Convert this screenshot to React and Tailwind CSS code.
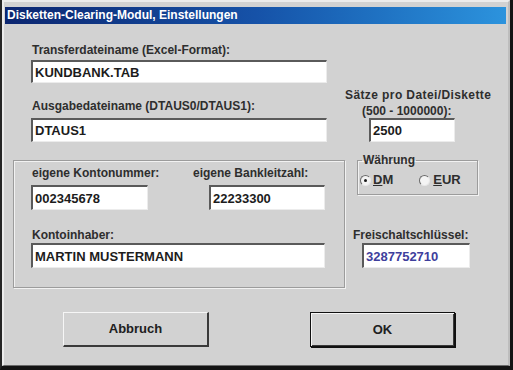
import React from "react";

function Label({ className = "", children }) {
  return (
    <div className={`text-[12px] leading-[14px] text-[#2e2e2e] whitespace-nowrap ${className}`}>
      {children}
    </div>
  );
}

function Field({ className = "", tone = "text-[#1c1c1c]", children }) {
  return (
    <div
      className={`bg-white border-t-2 border-l-2 border-t-[#5a5a5a] border-l-[#5a5a5a] border-r border-b border-r-[#ececec] border-b-[#ececec] flex items-center pl-[2px] text-[13px] leading-[15px] whitespace-nowrap overflow-hidden ${tone} ${className}`}
    >
      {children}
    </div>
  );
}

function Radio({ checked }) {
  return (
    <div className="w-[11px] h-[11px] rounded-full bg-[#f4f4f4] border border-t-[#6a6a6a] border-l-[#6a6a6a] border-r-[#e8e8e8] border-b-[#e8e8e8] flex items-center justify-center">
      {checked ? <div className="w-[3px] h-[3px] rounded-full bg-[#1a1a1a]" /> : null}
    </div>
  );
}

export default function App() {
  return (
    <div className="w-[513px] h-[370px] bg-[#d2d2d2] border-l-2 border-l-[#262626] border-r-[3px] border-r-[#141414] border-b-[4px] border-b-[#141414] font-['Liberation_Sans',Arial,sans-serif] font-bold overflow-hidden">
      <div className="h-full border-t-2 border-l-2 border-t-[#ececec] border-l-[#ececec] border-r-2 border-r-[#bdbdbd] border-b border-b-[#6a6a6a] pt-[5px] pl-px pr-[2px] flex flex-col">
        {/* title bar */}
        <div className="h-[17px] bg-linear-to-r from-[#0c2670] via-[#1652a8] to-[#2c93dd] text-white text-[12px] leading-[17px] pl-[2px] whitespace-nowrap">
          Disketten-Clearing-Modul, Einstellungen
        </div>

        <div className="flex">
          {/* left column */}
          <div className="ml-[8px] w-[332px] flex flex-col">
            <Label className="mt-[19px] pl-[19px]">Transferdateiname (Excel-Format):</Label>
            <Field className="mt-[3px] ml-[18px] w-[296px] h-[23px]">KUNDBANK.TAB</Field>

            <Label className="mt-[16px] pl-[19px]">Ausgabedateiname (DTAUS0/DTAUS1):</Label>
            <Field className="mt-[5px] ml-[18px] w-[296px] h-[24px]">DTAUS1</Field>

            <div className="mt-[18px] w-[332px] h-[128px] border border-[#9c9c9c] shadow-[inset_1px_1px_0_#f2f2f2,1px_1px_0_#f2f2f2] flex flex-col">
              <div className="mt-[5px] flex">
                <Label className="ml-[18px] w-[161px]">eigene Kontonummer:</Label>
                <Label>eigene Bankleitzahl:</Label>
              </div>
              <div className="mt-[5px] flex">
                <Field className="ml-[17px] w-[117px] h-[25px]">002345678</Field>
                <Field className="ml-[61px] w-[116px] h-[25px]">22233300</Field>
              </div>
              <Label className="mt-[18px] ml-[18px]">Kontoinhaber:</Label>
              <Field className="mt-[1px] ml-[17px] w-[294px] h-[25px]">MARTIN MUSTERMANN</Field>
            </div>
          </div>

          {/* right column */}
          <div className="flex-1 flex flex-col">
            <Label className="mt-[64px] tracking-[0.4px]">Sätze pro Datei/Diskette</Label>
            <Label className="mt-[2px] pl-[17px]">(500 - 1000000):</Label>
            <Field className="ml-[24px] w-[86px] h-[24px]">2500</Field>

            <fieldset className="mt-[11px] ml-[12px] w-[121px] border border-[#9c9c9c] shadow-[inset_1px_1px_0_#f2f2f2,1px_1px_0_#f2f2f2] pl-[2px] pb-[7px]">
              <legend className="ml-[2px] px-px text-[12px] leading-[14px] text-[#2e2e2e]">Währung</legend>
              <div className="mt-[6px] h-[14px] flex items-center text-[13px] leading-[14px] text-[#2e2e2e]">
                <Radio checked />
                <span className="ml-[2px]">
                  <span className="underline">D</span>M
                </span>
                <span className="ml-[26px]">
                  <Radio />
                </span>
                <span className="ml-[3px]">
                  <span className="underline">E</span>UR
                </span>
              </div>
            </fieldset>

            <Label className="mt-[33px] pl-[8px]">Freischaltschlüssel:</Label>
            <Field className="mt-[1px] ml-[17px] w-[108px] h-[25px]" tone="text-[#3e3e9c]">
              3287752710
            </Field>
          </div>
        </div>

        {/* buttons */}
        <div className="mt-[24px] flex">
          <button className="ml-[58px] w-[146px] h-[35px] border-t border-l border-t-[#f6f6f6] border-l-[#f6f6f6] border-r-2 border-b-2 border-r-[#3a3a3a] border-b-[#3a3a3a] bg-[#d2d2d2] text-[13px] text-[#202020] font-bold">
            Abbruch
          </button>
          <button className="ml-[101px] w-[145px] h-[35px] border border-[#111111] shadow-[inset_1px_1px_0_#f6f6f6,inset_-1px_-1px_0_#3a3a3a,1px_1px_0_#111111] bg-[#d2d2d2] text-[13px] text-[#202020] font-bold">
            OK
          </button>
        </div>
      </div>
    </div>
  );
}
